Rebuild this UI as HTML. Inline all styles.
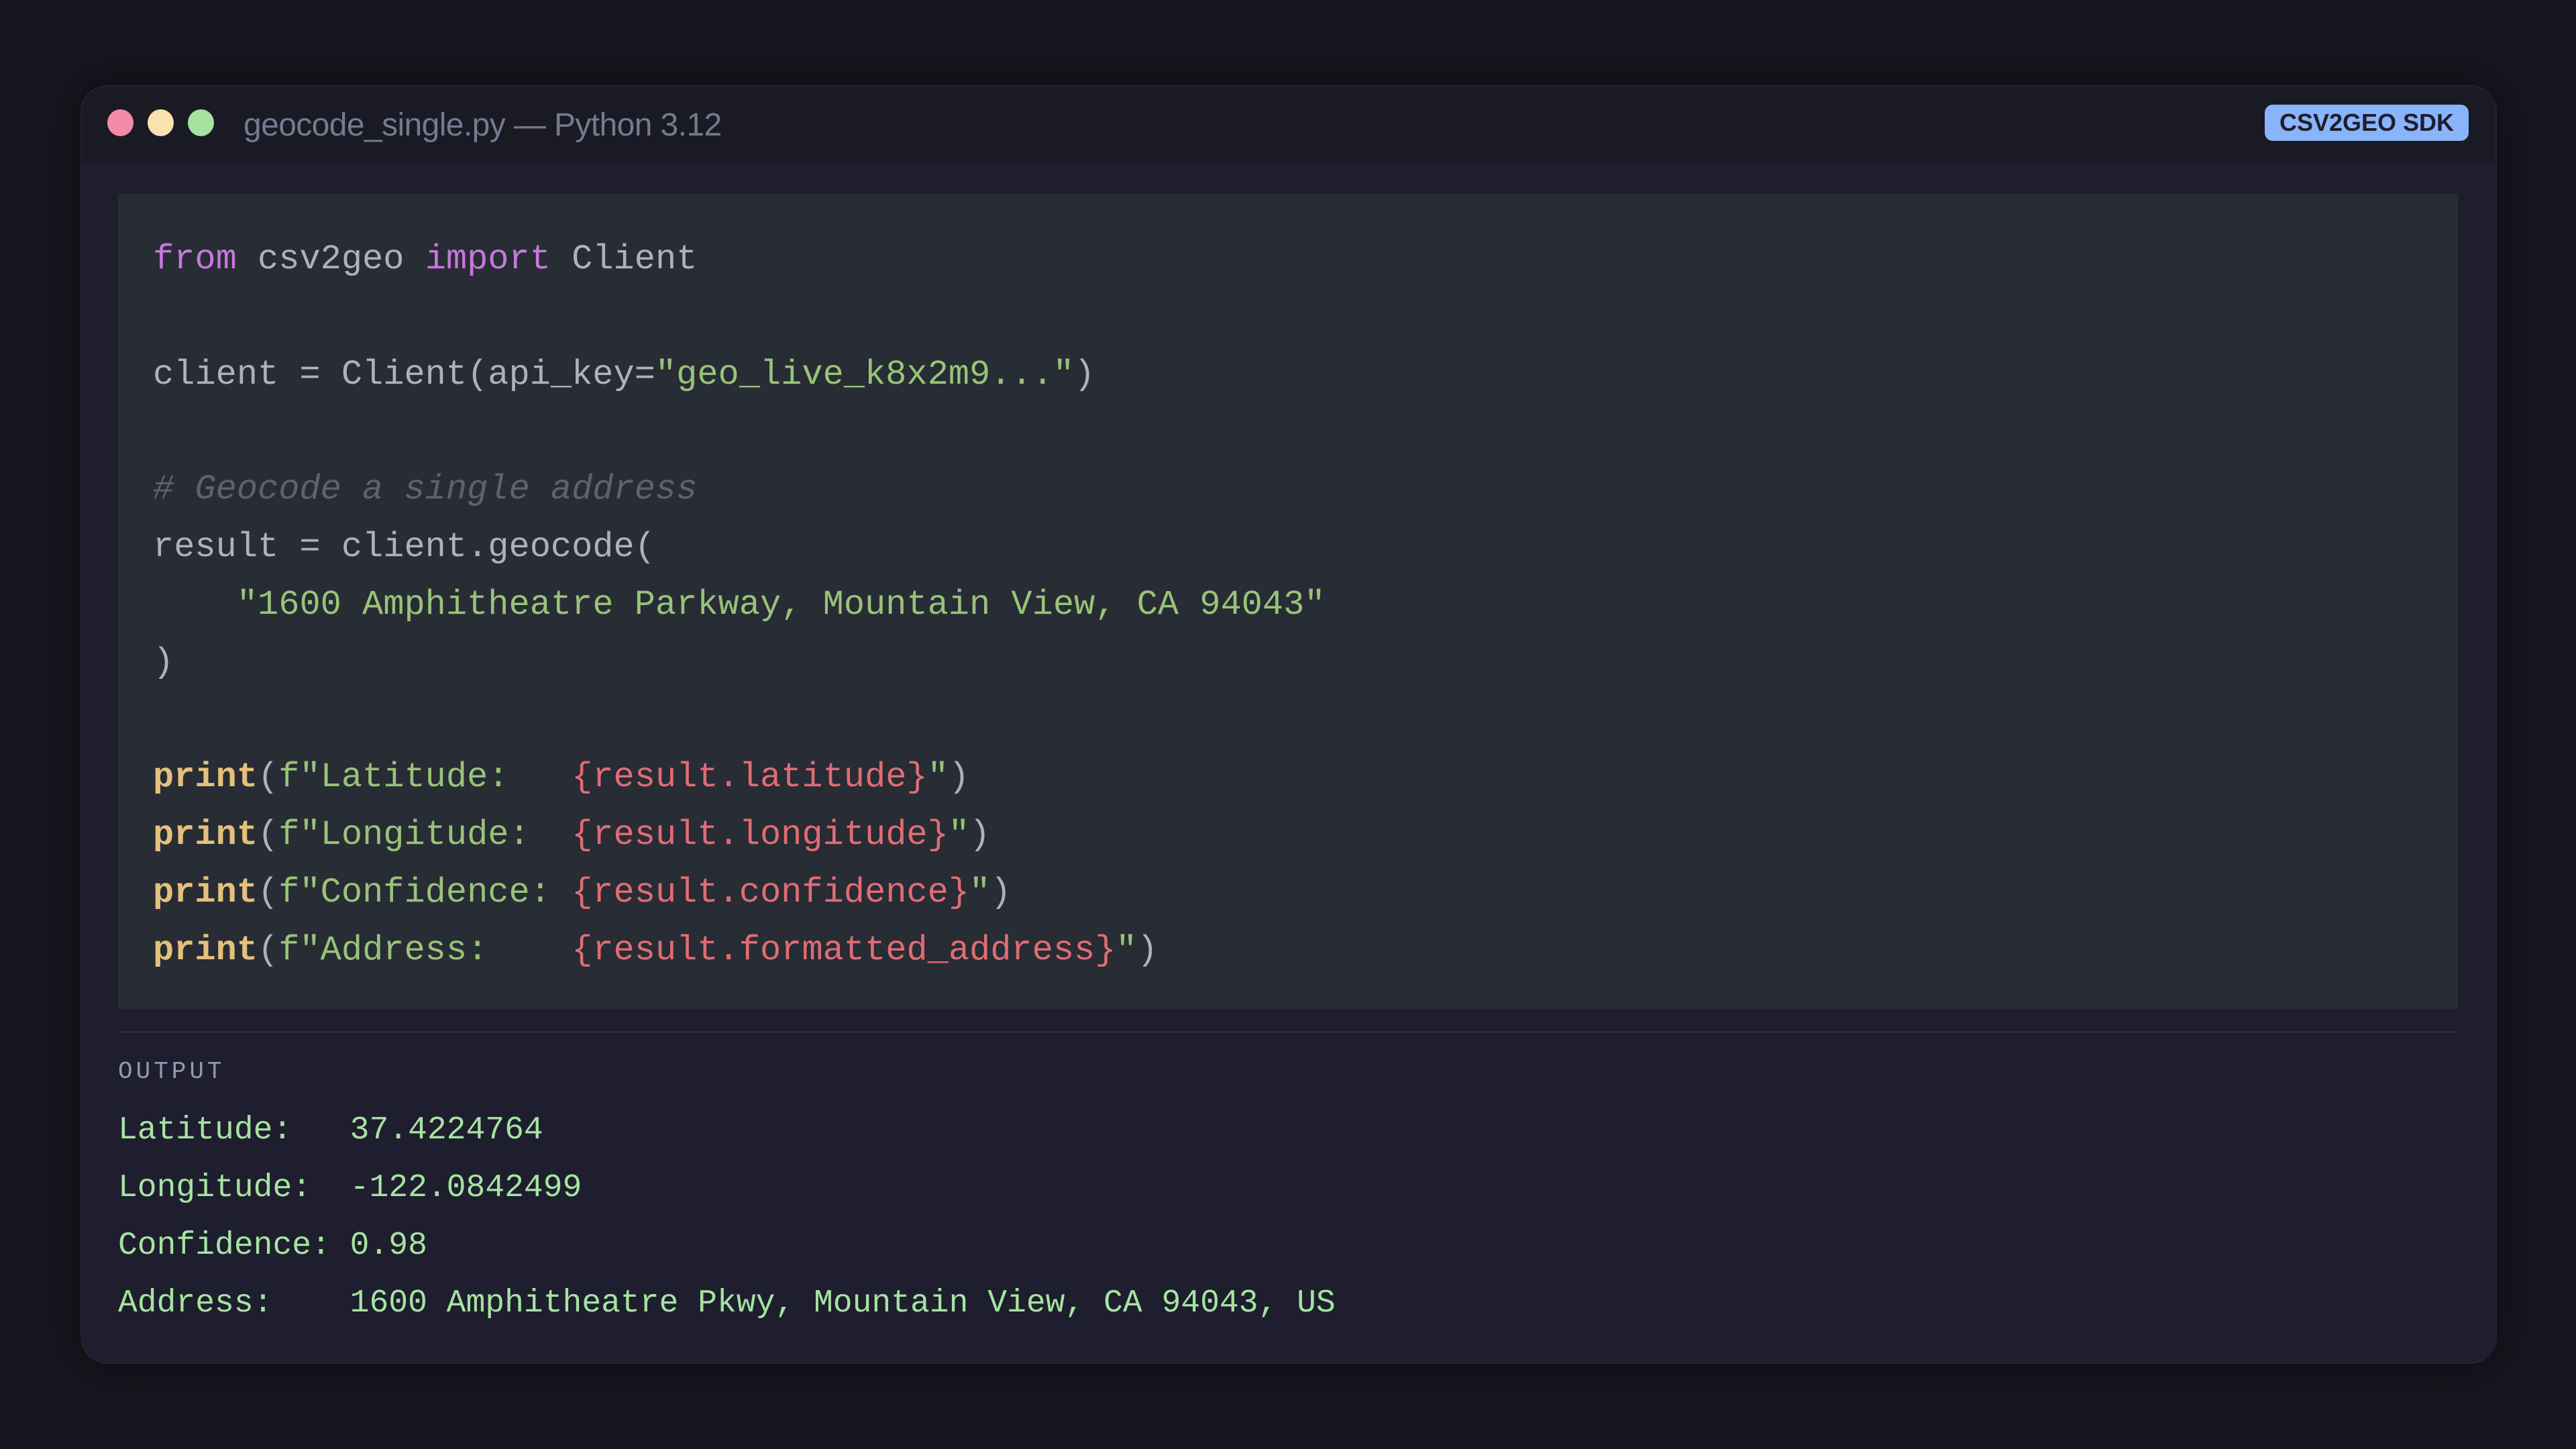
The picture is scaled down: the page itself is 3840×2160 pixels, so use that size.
<!DOCTYPE html>
<html><head><meta charset="utf-8"><style>
html,body{margin:0;padding:0;}
body{width:3840px;height:2160px;background:#16161f;position:relative;overflow:hidden;font-family:"Liberation Sans",sans-serif;}
.win{position:absolute;left:120px;top:127px;width:3602px;height:1906px;background:#1e1e2e;border-radius:40px;overflow:hidden;box-shadow:0 0 60px rgba(0,0,0,.5);border:2px solid #232334;box-sizing:border-box;}
.bar{position:absolute;left:0;top:0;right:0;height:113px;background:#1a1a25;}
.dot{position:absolute;top:163px;width:39px;height:40px;border-radius:50%;}
.title{position:absolute;left:363px;top:157px;font-size:48px;color:#767a90;line-height:60px;letter-spacing:-0.6px;}
.badge{position:absolute;left:3376px;top:156px;width:304px;height:54px;background:#89b4fa;border-radius:12px;color:#1e1e2e;font-weight:bold;font-size:36px;line-height:54px;text-align:center;}
.code{position:absolute;left:176px;top:289px;width:3488px;height:1215px;background:#282c34;}
pre{margin:0;font-family:"Liberation Mono",monospace;}
.code pre{position:absolute;left:52px;top:55px;font-size:52px;line-height:85.8px;color:#abb2bf;}
.k{color:#c678dd}.s{color:#98c379}.c{color:#5c6370;font-style:italic}.p{color:#e5c07b;font-weight:bold}.e{color:#e06c75}
.sep{position:absolute;left:176px;top:1537px;width:3488px;height:3px;background:#2c2c3c;}
.lbl{position:absolute;left:176px;top:1576px;font-family:"Liberation Mono",monospace;font-size:36px;letter-spacing:5px;color:#9399b2;line-height:44px;}
.out{position:absolute;left:176px;top:1642px;font-size:48px;line-height:86px;color:#a6e3a1;}
</style></head><body>
<div class="win"><div class="bar"></div></div>
<div class="dot" style="left:160px;background:#f38ba8"></div>
<div class="dot" style="left:220px;background:#f9e2af"></div>
<div class="dot" style="left:280px;background:#a6e3a1"></div>
<div class="title">geocode_single.py — Python 3.12</div>
<div class="badge">CSV2GEO SDK</div>
<div class="code"><pre><span class="k">from</span> csv2geo <span class="k">import</span> Client

client = Client(api_key=<span class="s">"geo_live_k8x2m9..."</span>)

<span class="c"># Geocode a single address</span>
result = client.geocode(
    <span class="s">"1600 Amphitheatre Parkway, Mountain View, CA 94043"</span>
)

<span class="p">print</span>(<span class="s">f"Latitude:   </span><span class="e">{result.latitude}</span><span class="s">"</span>)
<span class="p">print</span>(<span class="s">f"Longitude:  </span><span class="e">{result.longitude}</span><span class="s">"</span>)
<span class="p">print</span>(<span class="s">f"Confidence: </span><span class="e">{result.confidence}</span><span class="s">"</span>)
<span class="p">print</span>(<span class="s">f"Address:    </span><span class="e">{result.formatted_address}</span><span class="s">"</span>)</pre></div>
<div class="sep"></div>
<div class="lbl">OUTPUT</div>
<pre class="out">Latitude:   37.4224764
Longitude:  -122.0842499
Confidence: 0.98
Address:    1600 Amphitheatre Pkwy, Mountain View, CA 94043, US</pre>
</body></html>
